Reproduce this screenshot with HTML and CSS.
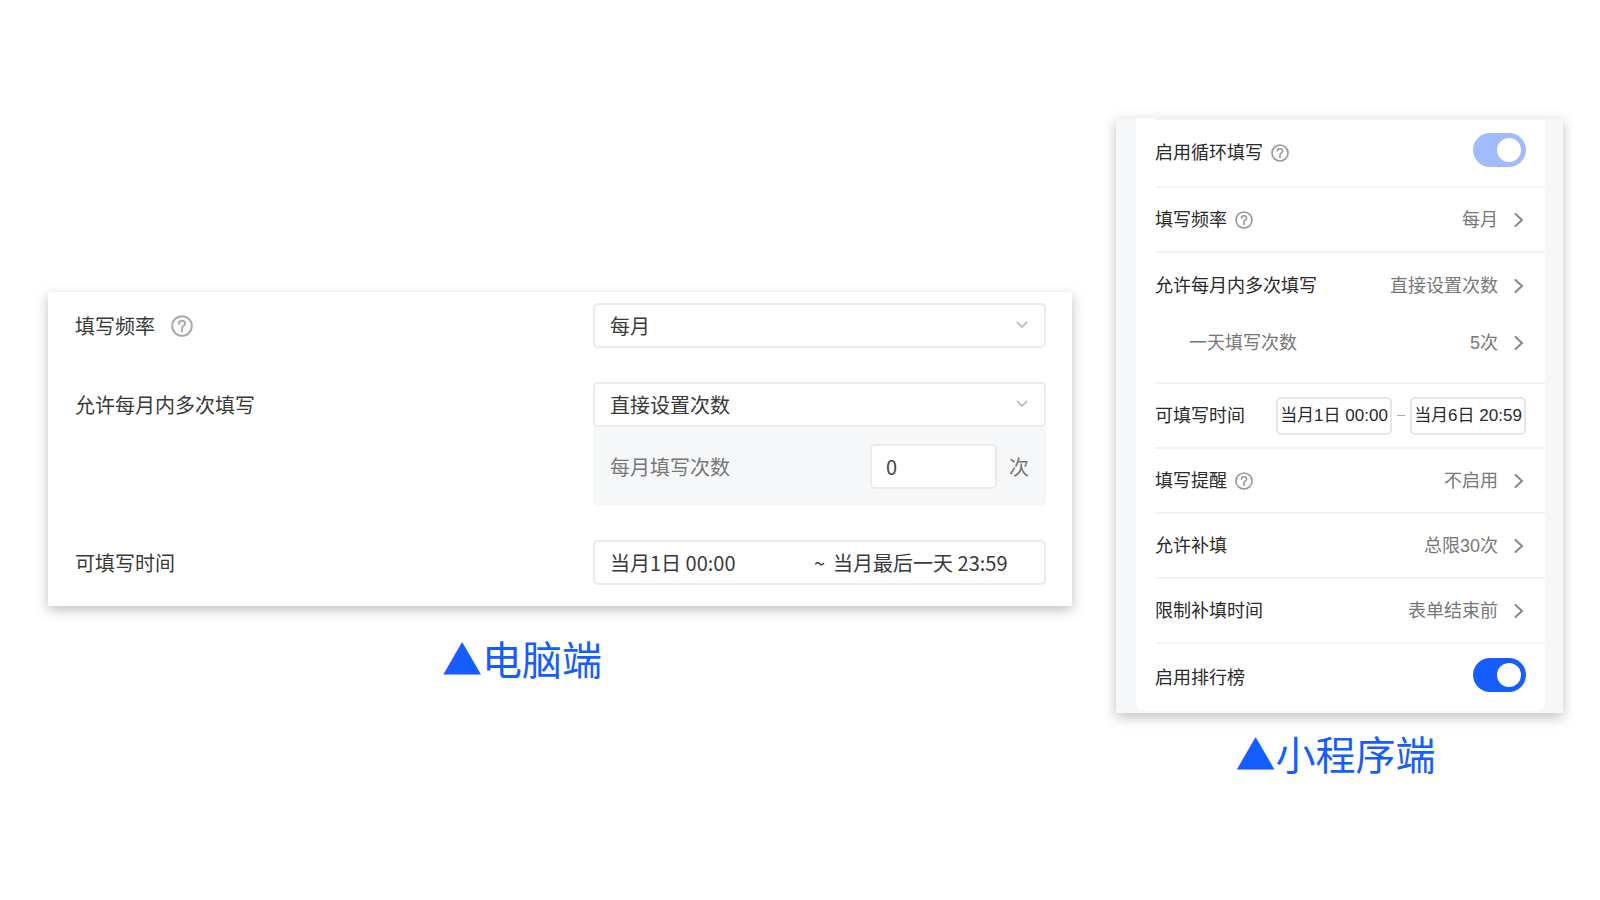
FILE: index.html
```html
<!DOCTYPE html>
<html lang="zh-CN">
<head>
<meta charset="utf-8">
<meta name="viewport" content="width=device-width, initial-scale=1">
<title>循环填写设置</title>
<link rel="stylesheet" href="styles.css">
</head>
<body>
<svg class="symbols" aria-hidden="true">
  <symbol id="help" viewBox="0 0 22 22">
    <circle cx="11" cy="11" r="9.8" />
    <path d="M7.9 8.7c0-1.8 1.3-2.9 3.1-2.9s3.1 1.1 3.1 2.7c0 1.2-.7 1.8-1.6 2.4-1 .7-1.5 1.1-1.5 2.4M11 14.6v1.8" />
  </symbol>
  <symbol id="down" viewBox="0 0 12 12"><path d="M1.5 3.5 6 8l4.500-4.500" /></symbol>
  <symbol id="next" viewBox="0 0 14 14"><path d="M3.500 1 10 7l-6.500 6" /></symbol>
</svg>
<main class="page">
  <figure class="demo demo-desktop">
    <form class="card form">
      <div class="field">
        <div class="name">
          <label for="freq">填写频率</label>
          <button type="button" class="help" aria-label="填写频率说明"><svg><use href="#help" /></svg></button>
        </div>
        <div class="select">
          <select id="freq"><option>每月</option></select>
          <svg><use href="#down" /></svg>
        </div>
      </div>
      <div class="field">
        <div class="name"><label for="multi">允许每月内多次填写</label></div>
        <div class="group">
          <div class="select">
            <select id="multi"><option>直接设置次数</option></select>
            <svg><use href="#down" /></svg>
          </div>
          <div class="count">
            <label for="times">每月填写次数</label>
            <input id="times" class="number" type="text" inputmode="numeric" value="0">
            <span>次</span>
          </div>
        </div>
      </div>
      <div class="field">
        <div class="name"><label for="start">可填写时间</label></div>
        <div class="range">
          <input id="start" type="text" value="当月1日 00:00">
          <span>~</span>
          <input type="text" value="当月最后一天 23:59" aria-label="结束时间">
        </div>
      </div>
    </form>
    <figcaption class="caption">▲电脑端</figcaption>
  </figure>

  <figure class="demo demo-mini">
    <div class="card phone">
      <form class="sheet">
        <div class="row row-first">
          <label for="loop">启用循环填写</label>
          <button type="button" class="help" aria-label="启用循环填写说明"><svg><use href="#help" /></svg></button>
          <input id="loop" class="switch switch-light" type="checkbox" checked>
        </div>
        <div class="row">
          <label for="m-freq">填写频率</label>
          <button type="button" class="help" aria-label="填写频率说明"><svg><use href="#help" /></svg></button>
          <button id="m-freq" type="button" class="value">每月<svg><use href="#next" /></svg></button>
        </div>
        <div class="pair">
          <div class="row">
            <label for="m-multi">允许每月内多次填写</label>
            <button id="m-multi" type="button" class="value">直接设置次数<svg><use href="#next" /></svg></button>
          </div>
          <div class="row row-sub">
            <label for="m-day">一天填写次数</label>
            <button id="m-day" type="button" class="value">5次<svg><use href="#next" /></svg></button>
          </div>
        </div>
        <div class="row">
          <label for="m-start">可填写时间</label>
          <div class="times">
            <button id="m-start" type="button" class="time">当月1日 00:00</button>
            <span class="dash"></span>
            <button type="button" class="time">当月6日 20:59</button>
          </div>
        </div>
        <div class="row">
          <label for="m-remind">填写提醒</label>
          <button type="button" class="help" aria-label="填写提醒说明"><svg><use href="#help" /></svg></button>
          <button id="m-remind" type="button" class="value">不启用<svg><use href="#next" /></svg></button>
        </div>
        <div class="row">
          <label for="m-late">允许补填</label>
          <button id="m-late" type="button" class="value">总限30次<svg><use href="#next" /></svg></button>
        </div>
        <div class="row">
          <label for="m-limit">限制补填时间</label>
          <button id="m-limit" type="button" class="value">表单结束前<svg><use href="#next" /></svg></button>
        </div>
        <div class="row row-last">
          <label for="rank">启用排行榜</label>
          <input id="rank" class="switch" type="checkbox" checked>
        </div>
      </form>
    </div>
    <figcaption class="caption">▲小程序端</figcaption>
  </figure>
</main>
</body>
</html>
```
FILE: styles.css
```css
* { box-sizing: border-box; }

body {
  margin: 0;
  background: #fff;
  color: #3a3a3a;
  font-family: "Noto Sans CJK SC", sans-serif;
}

button, input, select { font: inherit; color: inherit; }
button { padding: 0; border: 0; background: none; cursor: pointer; }
svg { fill: none; stroke: currentColor; stroke-linecap: round; stroke-linejoin: round; }

.symbols { position: absolute; width: 0; height: 0; }

.page {
  display: grid;
  grid-template-columns: 1024fr 447fr;
  gap: 44px;
  align-items: start;
  padding: 118px 37px 0 48px;
}

.demo { margin: 0; }
.demo-desktop { padding-top: 174px; }
.card { box-shadow: 0 4px 12px rgba(0, 0, 0, 0.25); }

.caption {
  color: #165dff;
  font-size: 40px;
  line-height: 60px;
  text-align: center;
}
.demo-desktop .caption { margin-top: 22px; padding-right: 76px; }
.demo-mini .caption { margin-top: 10px; padding-right: 8px; }

/* Desktop form */
.form {
  display: grid;
  gap: 34px;
  padding: 11px 26px 21px 27px;
  font-size: 20px;
  line-height: 30px;
}
.field {
  display: grid;
  grid-template-columns: minmax(0, 518fr) minmax(0, 453fr);
  align-items: start;
}
.name { display: flex; align-items: center; gap: 16px; height: 45px; }
.help { display: flex; color: #aaa; }
.help svg { width: 22px; height: 22px; stroke-width: 2; }

.select { position: relative; }
.select select {
  display: block;
  width: 100%;
  height: 45px;
  padding: 0 15px;
  border: 2px solid #ebebeb;
  border-radius: 5px;
  background: #fff;
  appearance: none;
}
.select svg {
  position: absolute;
  top: 16px;
  right: 18px;
  width: 12px;
  height: 12px;
  color: #c4c4c4;
  stroke-width: 2;
  pointer-events: none;
}
.group { border-radius: 5px; background: #f6f7f9; }
.count {
  display: flex;
  align-items: center;
  gap: 12px;
  padding: 17px;
  color: #777;
}
.number {
  width: 127px;
  height: 45px;
  margin-left: auto;
  padding: 0 14px;
  border: 2px solid #ebebeb;
  border-radius: 5px;
  background: #fff;
  color: #444;
}
.range {
  display: flex;
  align-items: center;
  height: 45px;
  padding: 0 15px;
  border: 2px solid #ebebeb;
  border-radius: 5px;
}
.range input {
  flex: 1;
  min-width: 0;
  padding: 0;
  border: 0;
  background: none;
}
.range span { padding: 0 8px; }

/* Mini program sheet */
.phone { padding: 0 18px 2px 20px; background: #f6f7f9; }
.sheet {
  padding-left: 19px;
  border-radius: 0 0 8px 8px;
  background: #fff;
  color: #2a2a2a;
  font-family: "Liberation Sans", "Noto Sans CJK SC", sans-serif;
  font-size: 18px;
  line-height: 26px;
}
.row {
  display: flex;
  align-items: center;
  gap: 8px;
  height: 65px;
  padding-right: 19px;
  border-bottom: 2px solid #f3f3f4;
}
.row-first { height: 70px; border-top: 2px solid #f3f3f4; }
.row-last { height: 67px; border-bottom: 0; }
.pair { height: 131px; border-bottom: 2px solid #f3f3f4; }
.pair .row { border-bottom: 0; }
.pair .row-sub { height: 50px; padding-left: 34px; color: #777; }
.sheet .help { color: #999; }
.sheet .help svg { width: 18px; height: 18px; }

.value {
  display: flex;
  align-items: center;
  gap: 14px;
  margin-left: auto;
  color: #777;
}
.value svg { width: 14px; height: 14px; stroke-width: 2; color: #888; }

.times { display: flex; align-items: center; gap: 5px; margin-left: auto; }
.time {
  width: 116px;
  height: 38px;
  border: 2px solid #e6e6e6;
  border-radius: 5px;
  font-size: 17px;
  white-space: nowrap;
}
.dash { width: 8px; height: 1px; background: #aaa; }

.switch {
  display: flex;
  align-items: center;
  justify-content: flex-end;
  width: 53px;
  height: 34px;
  margin: 0 0 6px auto;
  padding: 5px;
  border-radius: 17px;
  background: #165dff;
  appearance: none;
}
.switch::before {
  width: 24px;
  height: 24px;
  border-radius: 50%;
  background: #fff;
  content: "";
}
.switch-light { background: #a2bbff; }
```
